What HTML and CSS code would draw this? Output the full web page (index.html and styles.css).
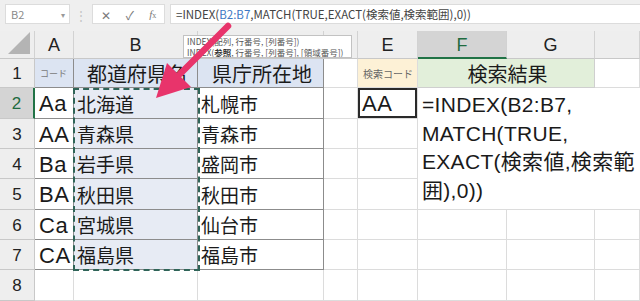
FILE: index.html
```html
<!DOCTYPE html>
<html lang="ja">

<head>
    <meta charset="UTF-8">
    <meta name="viewport" content="width=device-width, initial-scale=1.0">
    <title>INDEX MATCH EXACT</title>
    <link rel="stylesheet" href="styles.css">
</head>

<body>
    <div class="app">
        <div class="formula-bar">
            <div class="name-box"><span>B2</span><span class="caret">▾</span></div>
            <div class="grip">⋮</div>
            <div class="fx-box">
                <span>✕</span>
                <span>✓</span>
                <span class="fx"><i>f</i><small>x</small></span>
            </div>
            <div class="formula-input">=INDEX(<span class="ref">B2:B7</span>,MATCH(TRUE,EXACT(検索値,検索範囲),0))</div>
        </div>

        <div class="grid">
            <!-- column headers (C and D sit under the tooltip) -->
            <div class="corner"><span class="tri"></span></div>
            <div class="ch">A</div>
            <div class="ch">B</div>
            <div class="ch"></div>
            <div class="ch"></div>
            <div class="ch">E</div>
            <div class="ch active">F</div>
            <div class="ch">G</div>
            <div class="ch"></div>

            <!-- row 1 -->
            <div class="rh">1</div>
            <div class="c tb head small">コード</div>
            <div class="c tb head big">都道府県名</div>
            <div class="c tb head big">県庁所在地</div>
            <div class="c"></div>
            <div class="c key small">検索コード</div>
            <div class="c result">検索結果</div>
            <div class="c"></div>

            <!-- row 2 -->
            <div class="rh active">2</div>
            <div class="c tb code">Aa</div>
            <div class="c tb pref">北海道</div>
            <div class="c tb">札幌市</div>
            <div class="c"></div>
            <div class="c input code">AA</div>
            <div class="c formula">=INDEX(B2:B7,<br>MATCH(TRUE,<br>EXACT(検索値,検索範<br>囲),0))</div>

            <!-- row 3 -->
            <div class="rh">3</div>
            <div class="c tb code">AA</div>
            <div class="c tb pref">青森県</div>
            <div class="c tb">青森市</div>
            <div class="c"></div>
            <div class="c"></div>

            <!-- row 4 -->
            <div class="rh">4</div>
            <div class="c tb code">Ba</div>
            <div class="c tb pref">岩手県</div>
            <div class="c tb">盛岡市</div>
            <div class="c"></div>
            <div class="c"></div>

            <!-- row 5 -->
            <div class="rh">5</div>
            <div class="c tb code">BA</div>
            <div class="c tb pref">秋田県</div>
            <div class="c tb">秋田市</div>
            <div class="c"></div>
            <div class="c"></div>

            <!-- row 6 -->
            <div class="rh">6</div>
            <div class="c tb code">Ca</div>
            <div class="c tb pref">宮城県</div>
            <div class="c tb">仙台市</div>
            <div class="c"></div>
            <div class="c"></div>
            <div class="c"></div>
            <div class="c"></div>
            <div class="c"></div>

            <!-- row 7 -->
            <div class="rh">7</div>
            <div class="c tb code">CA</div>
            <div class="c tb pref">福島県</div>
            <div class="c tb">福島市</div>
            <div class="c"></div>
            <div class="c"></div>
            <div class="c"></div>
            <div class="c"></div>
            <div class="c"></div>

            <!-- row 8 -->
            <div class="rh">8</div>
            <div class="c"></div>
            <div class="c"></div>
            <div class="c"></div>
            <div class="c"></div>
            <div class="c"></div>
            <div class="c"></div>
            <div class="c"></div>
            <div class="c"></div>
        </div>

        <!-- overlays -->
        <div class="ants"></div>
        <div class="tooltip">
            <div>INDEX(配列, 行番号, [列番号])</div>
            <div>INDEX(<b>参照</b>, 行番号, [列番号], [領域番号])</div>
        </div>
        <svg class="arrow" width="640" height="301" viewBox="0 0 640 301">
            <line x1="180" y1="74" x2="228" y2="26" stroke="#e8346b" stroke-width="6.5" stroke-linecap="round" />
            <polygon points="156,98 167,63 191,87" fill="#e8346b" />
        </svg>
    </div>
</body>

</html>
```

FILE: styles.css
```css
body {
    margin: 0;
    font-family: "Noto Sans CJK JP", "Noto Sans", sans-serif;
    background-color: #fff;
}

.app {
    position: relative;
    width: 640px;
    height: 301px;
    overflow: hidden;
}

/* formula bar */
.formula-bar {
    height: 31px;
    background-color: #efefef;
    display: flex;
    align-items: center;
    padding: 0 0 3px 5px;
    box-sizing: border-box;
}

.name-box {
    width: 65px;
    height: 20px;
    background-color: #fff;
    border: 1px solid #dcdcdc;
    box-sizing: border-box;
    display: flex;
    align-items: center;
    justify-content: space-between;
    padding: 0 4px 0 5px;
    font-size: 11px;
    color: #8a8a8a;
}

.caret {
    font-size: 8px;
    color: #999;
}

.grip {
    width: 22px;
    text-align: center;
    color: #c4c4c4;
    font-size: 12px;
}

.fx-box {
    width: 73px;
    height: 20px;
    background-color: #fff;
    border: 1px solid #dcdcdc;
    box-sizing: border-box;
    display: flex;
    align-items: center;
    justify-content: space-around;
    color: #7a7a7a;
    font-size: 12px;
}

.fx {
    font-family: "Liberation Serif", serif;
    font-size: 11px;
}

.fx small {
    font-size: 8px;
}

.formula-input {
    flex: 1;
    height: 20px;
    margin-left: 5px;
    background-color: #fff;
    border: 1px solid #dcdcdc;
    border-right: none;
    box-sizing: border-box;
    padding-left: 5px;
    font-size: 11.5px;
    line-height: 18px;
    color: #444;
    white-space: nowrap;
}

.ref {
    color: #3b77c4;
}

/* sheet grid */
.grid {
    display: grid;
    grid-template-columns: 35px 39px 124px 126px 34px 60px 89px 88px 45px;
    grid-template-rows: 28px 29px 31px 30px 30px 31px 30px 30px 31px;
}

.corner,
.ch,
.rh {
    background-color: #eeeeee;
    color: #222;
    display: flex;
    align-items: center;
    justify-content: center;
    box-sizing: border-box;
    border-right: 1px solid #d2d2d2;
    border-bottom: 1px solid #c8c8c8;
    font-family: "Liberation Sans", sans-serif;
}

.corner {
    position: relative;
}

.tri {
    position: absolute;
    right: 4px;
    bottom: 4px;
    width: 0;
    height: 0;
    border-left: 22px solid transparent;
    border-bottom: 22px solid #b4b4b4;
}

.ch {
    font-size: 18px;
    padding-top: 2px;
}

.rh {
    font-size: 17px;
    border-right-color: #c8c8c8;
    padding-top: 2px;
}

.ch.active {
    background-color: #d4d4d4;
    color: #1f6b3f;
    border-bottom: 2px solid #217346;
}

.rh.active {
    background-color: #d4d4d4;
    color: #1f6b3f;
    border-right: 2px solid #217346;
}

.c {
    box-sizing: border-box;
    border-right: 1px solid #dcdcdc;
    border-bottom: 1px solid #dcdcdc;
    display: flex;
    align-items: center;
    padding-left: 3px;
    font-size: 19px;
    color: #1a1a1a;
    white-space: nowrap;
    overflow: hidden;
}

.c.tb {
    border-right-color: #8c8c8c;
    border-bottom-color: #8c8c8c;
}

.c.code {
    font-family: "Liberation Sans", "Noto Sans CJK JP", sans-serif;
    font-size: 22px;
    letter-spacing: 0.5px;
    padding-left: 4px;
    padding-top: 2px;
}

.c.head {
    background-color: #dce4f2;
    justify-content: center;
}

.c.big {
    font-size: 20px;
}

.c.small {
    font-size: 10px;
    color: #666;
    padding-left: 5px;
}

.c.head.small {
    justify-content: flex-start;
    font-size: 9px;
    color: #7a7a7a;
}

.c.pref {
    background-color: #e7ebf4;
}

.c.key {
    background-color: #fdf1d6;
}

.c.result {
    grid-column: span 2;
    background-color: #e2efda;
    justify-content: center;
    font-size: 20px;
    border-bottom-color: #cfcfcf;
    border-right-color: #cfcfcf;
}

.c.input {
    box-shadow: inset 0 0 0 2px #2a2a2a;
}

.c.formula {
    grid-column: span 3;
    grid-row: span 4;
    align-items: flex-start;
    padding: 3px 0 0 4px;
    font-family: "Liberation Sans", "Noto Sans CJK JP", sans-serif;
    line-height: 28.5px;
    font-size: 21px;
    letter-spacing: 0.3px;
    border-right: none;
}

/* overlays */
.ants {
    position: absolute;
    left: 73px;
    top: 88px;
    width: 127px;
    height: 183px;
    box-sizing: border-box;
    border: 2px dashed #2f6458;
}

.tooltip {
    position: absolute;
    left: 183px;
    top: 35px;
    width: 169px;
    height: 23px;
    box-sizing: border-box;
    background-color: #fff;
    border: 1px solid #c2c2c2;
    padding: 0 3px;
    font-size: 8.5px;
    line-height: 10.5px;
    color: #555;
    white-space: nowrap;
    overflow: hidden;
}

.tooltip b {
    color: #333;
}

.arrow {
    position: absolute;
    left: 0;
    top: 0;
    pointer-events: none;
}
```
